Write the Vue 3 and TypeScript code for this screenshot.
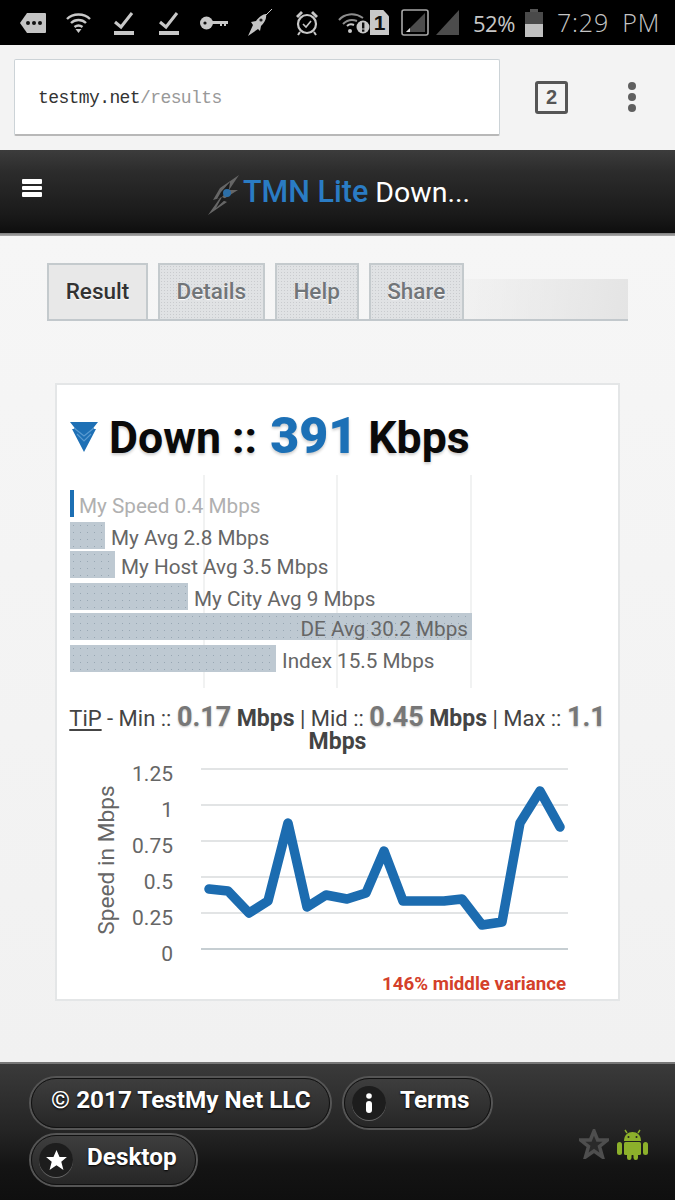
<template>
  <div class="page">
    <div class="status">
      <svg width="26" height="20" viewBox="0 0 26 20"><path d="M7 0H25a1 1 0 0 1 1 1V19a1 1 0 0 1-1 1H7L0 10Z" fill="#c4c4c4" /><g fill="#111"><circle cx="8" cy="10" r="2" /><circle cx="14" cy="10" r="2" /><circle cx="20" cy="10" r="2" /></g></svg>
      <svg class="ml20" width="25" height="22" viewBox="0 0 25 22"><g fill="none" stroke="#c8c8c8" stroke-width="2.4"><path d="M1 7C7 1 18 1 24 7" /><path d="M5 11C9 7 16 7 20 11" /><path d="M8.5 15C11 13 14 13 16.5 15" /></g><path d="M9.5 17H15.5L12.5 21Z" fill="#c8c8c8" /></svg>
      <svg class="ml23" width="20" height="24" viewBox="0 0 20 24"><path d="M1 11L7 16L18 2" fill="none" stroke="#c8c8c8" stroke-width="3" /><rect y="20" width="20" height="4" fill="#c8c8c8" /></svg>
      <svg class="ml25" width="20" height="24" viewBox="0 0 20 24"><path d="M1 11L7 16L18 2" fill="none" stroke="#c8c8c8" stroke-width="3" /><rect y="20" width="20" height="4" fill="#c8c8c8" /></svg>
      <svg class="ml21" width="28" height="14" viewBox="0 0 28 14"><circle cx="6.500" cy="7" r="6.500" fill="#c8c8c8" /><circle cx="5" cy="7" r="1.600" fill="#111" /><path d="M12 5H28V8H26V10H24V8H22V10H20V8H12Z" fill="#c8c8c8" /></svg>
      <svg class="ml17" width="27" height="28" viewBox="0 0 27 28"><path d="M27 0L20 7" stroke="#c8c8c8" stroke-width="1" /><path d="M21 5C18 5 14 8 11 12L6 13L8 16L3 27L13 20L15 22L16 17C19 14 22 10 21 5Z" fill="#c4c4c4" /><circle cx="16" cy="11" r="1.600" fill="#222" /></svg>
      <svg class="ml23" width="24" height="26" viewBox="0 0 24 26"><circle cx="12" cy="14" r="9" fill="none" stroke="#c8c8c8" stroke-width="2.200" /><path d="M8 14L11 17L16 11" fill="none" stroke="#c8c8c8" stroke-width="1.600" /><path d="M1 6L6 1L8 3L3 8ZM23 6L18 1L16 3L21 8Z" fill="#c8c8c8" /><path d="M5 22L3 25M19 22L21 25" stroke="#c8c8c8" stroke-width="2" /></svg>
      <svg class="ml19" width="32" height="22" viewBox="0 0 32 22"><g fill="none" stroke="#8d8d8d" stroke-width="2"><path d="M1 8C6 2 16 0 25 6" /><path d="M5 12C9 8 14 7 19 9" /></g><path d="M9 14C11 12 14 12 16 13" fill="none" stroke="#c8c8c8" stroke-width="2" /><circle cx="12" cy="19" r="2" fill="#c8c8c8" /><circle cx="25" cy="15" r="6.500" fill="#c8c8c8" /><rect x="24" y="10.500" width="2.400" height="6" fill="#111" /><rect x="24" y="17.500" width="2.400" height="2.200" fill="#111" /></svg>
      <span class="sim">1</span>
      <svg class="ml12" width="28" height="27" viewBox="0 0 28 27"><rect x="1" y="1" width="26" height="25" rx="2" fill="none" stroke="#a8a8a8" stroke-width="1.600" /><path d="M24 4V23H5Z" fill="#4c4c4c" /><path d="M5 23L9 19V23Z" fill="#ddd" /></svg>
      <svg class="ml7" width="23" height="25" viewBox="0 0 23 25"><path d="M23 0V25H0Z" fill="#4c4c4c" /></svg>
      <span class="pct">52%</span>
      <svg class="ml8" width="18" height="28" viewBox="0 0 18 28"><rect x="5" width="8" height="3" fill="#555" /><rect y="3" width="18" height="12" fill="#4a4a4a" /><rect y="15" width="18" height="13" fill="#c0c0c0" /></svg>
      <span class="clock">7:29 PM</span>
    </div>

    <div class="addr">
      <div class="urlbox"><span class="host">testmy.net</span><span class="path">/results</span></div>
      <span class="tabcount">2</span>
      <div class="more"><i /><i /><i /></div>
    </div>

    <header class="head">
      <div class="burger"><i /><i /><i /></div>
      <svg class="bolt" width="32" height="40" viewBox="0 0 32 40">
        <path d="M32 0L13 13L6 25L13 23L1 40L20 27L15 25L31 15L22 15Z" fill="#666" />
        <path d="M23 7L14 17L10 24L15 22L9 33L19 24L15 22L22 14Z" fill="#1c1c1c" />
        <circle cx="20" cy="18" r="4" fill="#2c6ea6" />
      </svg>
      <h1><span class="brand">TMN Lite</span> Down...</h1>
    </header>

    <main class="content">
      <nav class="tabs">
        <a v-for="t in tabs" :key="t" class="tab" :class="{ on: t === 'Result' }">{{ t }}</a>
      </nav>

      <section class="card">
        <h2 class="speed">
          <svg width="28" height="30" viewBox="0 0 28 30"><path d="M0 0H28L22.500 7H26L14 30L2 7H5.500Z" fill="#1e70b5" /><path d="M4 6L14 14L24 6M7 12L14 19L21 12" fill="none" stroke="#5a9bd1" stroke-width="1.200" /></svg>
          <span>Down :: <b>391</b> Kbps</span>
        </h2>

        <div class="bars">
          <i class="vline" /><i class="vline" /><i class="vline" />
          <div v-for="r in rows" :key="r.label" class="row" :style="{ height: r.h + 'px' }">
            <div class="bar" :class="r.cls" :style="{ width: r.w + 'px' }">
              <span v-if="r.inside" class="inner">{{ r.label }}</span>
            </div>
            <span v-if="!r.inside" class="lbl" :class="r.cls">{{ r.label }}</span>
          </div>
        </div>

        <p class="tip">
          <u>TiP</u> - Min :: <b class="num">0.17</b> <b>Mbps</b> | Mid :: <b class="num">0.45</b> <b>Mbps</b> | Max :: <b class="num">1.1</b> <b>Mbps</b>
        </p>

        <svg class="chart" width="520" height="206" viewBox="0 0 520 206">
          <line v-for="g in grid" :key="g.t" x1="144" x2="511" :y1="g.y" :y2="g.y" :stroke="g.t === '0' ? '#c6ced2' : '#e2e4e5'" stroke-width="2" />
          <text v-for="g in grid" :key="'l' + g.t" x="116" :y="g.y + 12" text-anchor="end" class="tick">{{ g.t }}</text>
          <text class="axis" transform="translate(57 100) rotate(-90)" text-anchor="middle">Speed in Mbps</text>
          <polyline :points="line" fill="none" stroke="#1c6cb0" stroke-width="9.500" stroke-linejoin="round" stroke-linecap="round" />
        </svg>

        <div class="variance">146% middle variance</div>
      </section>
    </main>

    <footer class="foot">
      <div class="pills">
        <div class="pillrow">
          <a class="pill copy"><span>© 2017 TestMy Net LLC</span></a>
          <a class="pill terms"><i class="dot"><svg width="8" height="20" viewBox="0 0 8 20"><circle cx="4" cy="3" r="2.800" fill="#fff" /><rect x="1" y="8" width="6" height="12" rx="3" fill="#fff" /></svg></i><span>Terms</span></a>
        </div>
        <div class="pillrow">
          <a class="pill desk"><i class="dot"><svg width="21" height="20" viewBox="0 0 24 23"><path d="M12 0L15.500 8H24L17.500 13.500L20 23L12 17.500L4 23L6.500 13.500L0 8H8.500Z" fill="#fff" /></svg></i><span>Desktop</span></a>
        </div>
      </div>
      <div class="badges">
        <svg width="30" height="30" viewBox="0 0 30 30"><path d="M15 2L18.600 11H28.500L20.500 17.500L23.500 28L15 22L6.500 28L9.500 17.500L1.500 11H11.400Z" fill="#2a2a2a" stroke="#4e4e4e" stroke-width="3.500" /></svg>
        <svg width="31" height="31" viewBox="0 0 31 31">
          <g fill="#8cb02b">
            <path d="M7 12C7 6 11 3 15.500 3S24 6 24 12Z" />
            <rect x="7" y="13" width="17" height="13" rx="1.500" />
            <rect x="0" y="13" width="5" height="13" rx="2.500" />
            <rect x="26" y="13" width="5" height="13" rx="2.500" />
            <rect x="10" y="24" width="4.500" height="7" rx="2.200" />
            <rect x="16.500" y="24" width="4.500" height="7" rx="2.200" />
          </g>
          <path d="M10 4L8 1M21 4L23 1" stroke="#8cb02b" stroke-width="1.400" />
          <circle cx="11.500" cy="8" r="1" fill="#222" /><circle cx="19.500" cy="8" r="1" fill="#222" />
        </svg>
      </div>
    </footer>
  </div>
</template>

<script setup lang="ts">
import { computed } from "vue";

const tabs = ["Result", "Details", "Help", "Share"];

const rows = [
  { label: "My Speed 0.4 Mbps", w: 4, h: 32, cls: "mine", inside: false },
  { label: "My Avg 2.8 Mbps", w: 35, h: 29, cls: "", inside: false },
  { label: "My Host Avg 3.5 Mbps", w: 45, h: 32, cls: "", inside: false },
  { label: "My City Avg 9 Mbps", w: 118, h: 30, cls: "", inside: false },
  { label: "DE Avg 30.2 Mbps", w: 402, h: 32, cls: "", inside: true },
  { label: "Index 15.5 Mbps", w: 206, h: 28, cls: "", inside: false },
];

const ticks = ["1.25", "1", "0.75", "0.5", "0.25", "0"];
const grid = ticks.map((t, i) => ({ t, y: 9 + i * 36 }));

// page coordinates of the samples, svg sits at 57,760
const samples: [number, number][] = [
  [209, 889], [228, 891], [249, 913], [268, 901], [288, 823], [307, 907], [326, 895],
  [347, 899], [366, 893], [384, 851], [403, 901], [424, 901], [444, 901], [462, 899],
  [482, 925], [502, 922], [520, 823], [540, 791], [560, 827],
];
const line = computed(() => samples.map(([x, y]) => `${x - 57},${y - 760}`).join(" "));
</script>

<style scoped>
.page {
  width: 675px;
  height: 1200px;
  display: flex;
  flex-direction: column;
  overflow: hidden;
  font-family: Roboto, "Liberation Sans", sans-serif;
  background: #f3f3f3;
}

.status {
  height: 45px;
  box-sizing: border-box;
  background: #000;
  display: flex;
  align-items: center;
  padding-left: 20px;
  color: #c6c6c6;
  flex-shrink: 0;
}
.ml7 { margin-left: 7px; }
.ml8 { margin-left: 8px; }
.ml12 { margin-left: 12px; }
.ml17 { margin-left: 17px; }
.ml19 { margin-left: 19px; }
.ml20 { margin-left: 20px; }
.ml21 { margin-left: 21px; }
.ml23 { margin-left: 23px; }
.ml25 { margin-left: 25px; }
.sim {
  width: 19px;
  height: 25px;
  background: #c8c8c8;
  color: #111;
  font: 700 21px/25px "Liberation Sans", sans-serif;
  text-align: center;
  clip-path: polygon(0 0, 70% 0, 100% 25%, 100% 100%, 0 100%);
}
.pct {
  margin-left: 14px;
  width: 44px;
  font: 400 22px/1 "Open Sans", sans-serif;
  letter-spacing: -0.5px;
  white-space: nowrap;
}
.clock {
  margin-left: 14px;
  font: 300 25px/1 "Open Sans", sans-serif;
  letter-spacing: 0.8px;
  word-spacing: 6px;
  white-space: nowrap;
}

.addr {
  height: 105px;
  flex-shrink: 0;
  box-sizing: border-box;
  padding: 14px 0 0 14px;
  display: flex;
  align-items: flex-start;
  background: #f3f3f3;
}
.urlbox {
  width: 486px;
  height: 77px;
  box-sizing: border-box;
  background: #fff;
  border: 1px solid #ccd3d7;
  border-bottom: 2px solid #b8b8b8;
  border-radius: 2px;
  padding-left: 23px;
  font: 400 18px/77px "Liberation Mono", monospace;
  letter-spacing: -0.6px;
}
.host { color: #333; }
.path { color: #999; }
.tabcount {
  margin: 22px 0 0 35px;
  width: 33px;
  height: 33px;
  box-sizing: border-box;
  border: 3px solid #555;
  border-radius: 3px;
  text-align: center;
  font: 700 20px/27px "Liberation Sans", sans-serif;
  color: #555;
}
.more {
  margin: 23px 0 0 60px;
  display: flex;
  flex-direction: column;
  gap: 3px;
}
.more i {
  width: 8px;
  height: 8px;
  border-radius: 50%;
  background: #5f5f5f;
}

.head {
  height: 86px;
  flex-shrink: 0;
  box-sizing: border-box;
  display: flex;
  align-items: center;
  background: linear-gradient(#3c3c3c, #2c2c2c 25%, #1a1a1a 75%, #0e0e0e 96%, #777 96%, #aaa 100%);
  position: relative;
}
.burger {
  position: absolute;
  left: 22px;
  top: 29px;
  display: flex;
  flex-direction: column;
  gap: 2px;
}
.burger i {
  width: 20px;
  height: 4.600px;
  border-radius: 1px;
  background: #fff;
}
.bolt {
  margin-left: 207px;
  margin-top: 3px;
}
.head h1 {
  margin: -4px 0 0 4px;
  font-size: 28.500px;
  font-weight: 400;
  color: #fff;
  white-space: nowrap;
}
.brand {
  font-size: 30.500px;
  font-weight: 500;
  color: #2a7cc4;
}

.content {
  flex: 1;
  box-sizing: border-box;
  padding-top: 27px;
  background: linear-gradient(#f6f6f6, #f1f1f1);
}
.tabs {
  margin-left: 47px;
  width: 581px;
  height: 58px;
  box-sizing: border-box;
  display: flex;
  gap: 10px;
  border-bottom: 2px solid #c2c8cc;
  background: linear-gradient(100deg, rgba(0, 0, 0, 0) 62%, #e4e4e4 100%) bottom/100% 40px no-repeat;
}
.tab {
  box-sizing: border-box;
  height: 56px;
  padding: 0 16.700px;
  border: 2px solid #c4cacd;
  border-bottom: 0;
  background-color: #e0e2e4;
  background-image: radial-gradient(#c9cbce 0.7px, transparent 1px);
  background-size: 3px 3px;
  font-size: 22.500px;
  font-weight: 500;
  line-height: 52px;
  color: #717578;
  text-shadow: 0 1px 1px #fff;
}
.tab.on {
  background-color: #e8e8e8;
  background-image: none;
  color: #333;
}

.card {
  margin: 62px 0 0 55px;
  width: 565px;
  height: 618px;
  box-sizing: border-box;
  background: #fff;
  border: 2px solid #e4e6e7;
  padding: 0 13px;
}
.speed {
  margin: 22px 0 0;
  height: 60px;
  display: flex;
  align-items: center;
  gap: 11px;
  font-size: 44.600px;
  font-weight: 700;
  color: #0a0a0a;
  line-height: 60px;
  white-space: nowrap;
  text-shadow: 0 2px 3px rgba(0, 0, 0, 0.2);
}
.speed b {
  margin-left: 2px;
  color: #1c70b6;
  font-size: 50px;
}
.bars {
  margin-top: 8px;
  padding: 15px 0 15px;
  position: relative;
  height: 183px;
}
.vline {
  position: absolute;
  top: 0;
  bottom: 0;
  width: 2px;
  background: #f1f2f2;
}
.vline:nth-child(1) { left: 133px; }
.vline:nth-child(2) { left: 266px; }
.vline:nth-child(3) { left: 400px; }
.row {
  position: relative;
  display: flex;
  align-items: flex-start;
  gap: 6px;
}
.bar {
  height: 27px;
  flex-shrink: 0;
  box-sizing: border-box;
  background-color: #bec9d2;
  background-image: radial-gradient(#98a7b3 0.6px, transparent 1px);
  background-size: 7px 7px;
  text-align: right;
}
.bar.mine {
  background: #1c6fb4;
}
.inner,
.lbl {
  font-size: 20.700px;
  font-weight: 400;
  line-height: 32px;
  color: #666;
  white-space: nowrap;
}
.inner { padding-right: 4px; }
.lbl.mine {
  color: #b0b0b0;
  margin-left: -1px;
}
.tip {
  margin: 18px -10px 0;
  text-align: center;
  font-size: 22px;
  line-height: 23px;
  color: #444;
}
.tip b {
  font-weight: 700;
  font-size: 23px;
}
.tip .num {
  font-size: 27px;
  color: #777;
  text-shadow: 0 1px 2px rgba(0, 0, 0, 0.25);
}
.tip u { text-underline-offset: 3px; }
.chart {
  display: block;
  margin: 7px 0 0 -13px;
}
.tick {
  font-size: 21px;
  fill: #666;
}
.axis {
  font-size: 22.700px;
  fill: #666;
}
.variance {
  margin-top: 7px;
  padding-right: 39px;
  text-align: right;
  font-size: 18.700px;
  font-weight: 700;
  color: #d4402a;
}

.foot {
  height: 138px;
  flex-shrink: 0;
  box-sizing: border-box;
  border-top: 2px solid #777;
  padding: 12px 27px 0 29px;
  display: flex;
  justify-content: space-between;
  background: linear-gradient(#3a3a3a, #242424 50%, #141414 75%, #0f0f0f);
}
.pills {
  display: flex;
  flex-direction: column;
  gap: 3px;
}
.pillrow {
  display: flex;
  gap: 10px;
}
.pill {
  height: 54px;
  box-sizing: border-box;
  display: flex;
  align-items: center;
  border-radius: 27px;
  border: 2px solid #555;
  outline: 1px solid #111;
  outline-offset: -3px;
  background: linear-gradient(#3e3e3e, #262626);
  color: #fff;
  font-size: 24.300px;
  font-weight: 700;
  line-height: 42px;
  white-space: nowrap;
  text-shadow: 0 1px 2px #000;
}
.pill span { margin-bottom: 6px; }
.copy {
  width: 303px;
  padding-left: 20px;
}
.terms {
  width: 151px;
  padding-left: 8px;
}
.desk {
  width: 169px;
  padding-left: 8px;
}
.dot {
  width: 34px;
  height: 34px;
  flex-shrink: 0;
  border-radius: 50%;
  margin-right: 14px;
  display: flex;
  align-items: center;
  justify-content: center;
  background: #1d1d1d;
  box-shadow: 0 1px 0 #666;
}
.badges {
  margin-top: 53px;
  display: flex;
  gap: 8px;
  align-items: flex-start;
}
</style>
